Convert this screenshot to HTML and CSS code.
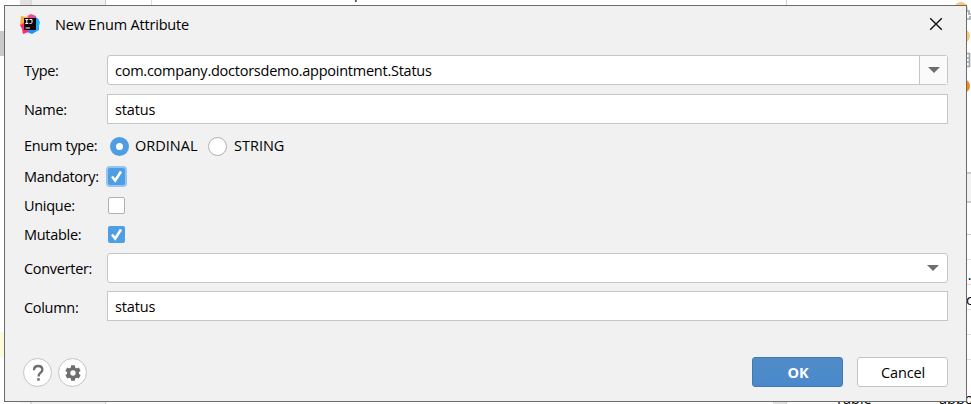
FILE: index.html
```
<!DOCTYPE html>
<html lang="en">
<head>
<meta charset="utf-8">
<title>New Enum Attribute</title>
<link rel="stylesheet" href="styles.css">
</head>
<body>
<div class="editor">
  <div class="edge"><i class="tab"></i><i class="line-mark"></i></div>
  <div class="scroll left"></div>
  <div class="gutter"></div>
  <div class="code"><span class="code-text">p</span></div>
  <div class="scroll right"></div>
  <div class="props">
    <i class="dot d1"></i><i class="dot d2"></i><i class="dot d3"></i>
    <svg class="side-icons" width="6" height="70" viewBox="0 0 6 70"><path d="M0 2h2v3h2M0 10h3V7" fill="none" stroke="#9aa7b0" stroke-width="1.6"/><path d="M0 44.5h2.500v13H0M0 49h2M0 53h2" fill="none" stroke="#9aa7b0" stroke-width="1.6"/></svg>
    <i class="bar"></i><i class="rule r1"></i><i class="rule r2"></i><i class="rule r3"></i><i class="rule r4"></i><i class="rule r5"></i><i class="rule r6"></i>
    <span class="cell c1">l.</span><span class="cell c2">c</span>
    <span class="cell c3">Table</span><span class="cell c4">appo</span>
  </div>
</div>
<main class="dialog">
  <header class="title">
    <svg class="logo" width="20" height="20" viewBox="0 0 20 20">
      <path d="M1 2l5 1 4-3-1 9-9 3z" fill="#fdae3d"/><path d="M0 11l8-4 3 10-8 3-1-5z" fill="#fe2877"/>
      <path d="M8 2l3-2 5 2-2 7-6-1z" fill="#f0489b"/><path d="M15 2l4 4v10l-7 4-5-2 7-9z" fill="#2a8cf8"/><path d="M17 5l3 3-2 8-3 1z" fill="#18b9f4"/>
      <path d="M4 4h12v12H4z" fill="#120609"/>
      <path d="M5.300 5.500h3M6.800 5.500v4M5.300 9.500h3M9.500 5.500h2.500v2.800q0 1.200-1.300 1.200H9.500M5.500 14h4.500" fill="none" stroke="#fff" stroke-width="1"/>
    </svg>
    <h1>New Enum Attribute</h1>
    <svg class="close" width="14" height="14" viewBox="0 0 14 14"><path d="M1.200 1.200l11.600 11.600M12.800 1.200L1.200 12.800" stroke="#111" stroke-width="1.400"/></svg>
  </header>
  <form class="form">
    <div class="row type"><label>Type:</label><div class="field combo"><span class="long">com.company.doctorsdemo.appointment.Status</span><b class="drop split"></b></div></div>
    <div class="row name"><label>Name:</label><div class="field"><span>status</span></div></div>
    <div class="row enum"><label>Enum type:</label><i class="radio on"></i><span class="ordinal">ORDINAL</span><i class="radio"></i><span class="string">STRING</span></div>
    <div class="row mandatory"><label>Mandatory:</label><i class="check on focus"><svg width="17" height="17" viewBox="0 0 17 17"><path d="M4 8.500l3.200 4L13 3.500" fill="none" stroke="#fff" stroke-width="2.500"/></svg></i></div>
    <div class="row unique"><label>Unique:</label><i class="check"></i></div>
    <div class="row mutable"><label>Mutable:</label><i class="check on"><svg width="17" height="17" viewBox="0 0 17 17"><path d="M4 8.500l3.200 4L13 3.500" fill="none" stroke="#fff" stroke-width="2.500"/></svg></i></div>
    <div class="row converter"><label>Converter:</label><div class="field combo"><b class="drop"></b></div></div>
    <div class="row column"><label>Column:</label><div class="field"><span>status</span></div></div>
  </form>
  <footer class="footer">
    <div class="round"><svg width="28" height="28" viewBox="0 0 28 28"><path d="M10 11.300Q10 7 14.200 7T18.400 10.700C18.400 13.700 14.500 13.700 14.500 17.400" fill="none" stroke="#6e6e6e" stroke-width="2.300"/><path d="M13.200 19.200h2.500v2.500h-2.500z" fill="#6e6e6e"/></svg></div>
    <div class="round"><svg width="28" height="28" viewBox="0 0 28 28"><g fill="#6e6e6e"><rect x="12" y="6.300" width="4" height="15.400" rx=".5"/><rect x="12" y="6.300" width="4" height="15.400" rx=".5" transform="rotate(60 14 14)"/><rect x="12" y="6.300" width="4" height="15.400" rx=".5" transform="rotate(120 14 14)"/><circle cx="14" cy="14" r="6"/></g><circle cx="14" cy="14" r="2.700" fill="#fff"/></svg></div>
    <div class="btn ok"><span>OK</span></div>
    <div class="btn cancel"><span>Cancel</span></div>
  </footer>
</main>
</body>
</html>
```
FILE: styles.css
```
* { box-sizing: border-box; }
body { margin: 0; width: 971px; height: 404px; overflow: hidden; position: relative; background: #fff; color: #000; font: 14.500px/20px "Open Sans", "Noto Sans", sans-serif; }
.editor { display: grid; grid-template-columns: 20px 12px 74px 667px 14px 184px; height: 404px; }
.editor > div { position: relative; overflow: hidden; }
.tab, .line-mark { position: absolute; left: 0; width: 5px; height: 25px; top: 31px; background: #c9c9c9; }
.line-mark { top: 332px; background: #fcfbdc; }
.left { background: linear-gradient(#e2e2e2 50%, #f8f8f8 50%); border-right: 2px solid #dcdcdc; }
.right { background: linear-gradient(#fff 50%, #e2e2e2 50%); border-right: 1px solid #d0d0d0; }
.gutter { background: #f1f1f1; border-right: 1px solid #c9c9c9; }
.code::before { content: ""; position: absolute; left: 45px; top: 0; height: 6px; width: 1px; background: #ddd; }
.code-text { position: absolute; left: 248px; top: -17px; }
.props > * { position: absolute; }
.dot { width: 14px; height: 14px; border-radius: 50%; background: #fbc77a; }
.d1 { left: 167px; top: 2px; }
.d2 { left: 169px; top: 29px; }
.d3 { left: 169px; top: 79px; background: #f8870d; }
.side-icons { left: 180px; top: 9px; }
.bar { left: 0; top: 172px; width: 184px; height: 31px; background: #f2f2f2; border: solid #ccc; border-width: 2px 0; }
.rule { left: 0; width: 184px; height: 1px; background: #ddd; }
.r1 { top: 234px; background: #c8c8c8; }
.r2 { top: 259px; }
.r3 { top: 284px; }
.r4 { top: 309px; }
.r5 { top: 334px; }
.r6 { top: 359px; }
.c1 { left: 177px; top: 265px; }
.c2 { left: 179px; top: 290px; }
.c3 { left: 48px; top: 389px; }
.c4 { left: 152px; top: 389px; }
.dialog { position: absolute; left: 4px; top: 5px; width: 963px; height: 397px; background: #f1f1f1; border: 1px solid #6b6b6d; display: flex; flex-direction: column; }
.title { height: 49px; display: flex; align-items: flex-start; padding: 8px 23px 0 15px; }
.title h1 { margin: 1px auto 0 15px; font-size: 14.500px; line-height: 20px; font-weight: 400; letter-spacing: -.18px; }
.close { margin-top: 3px; }
.form { margin: 0 18px 0 19px; }
.row { display: flex; align-items: center; height: 30px; }
.row label { width: 83px; flex: none; white-space: nowrap; letter-spacing: -.3px; padding-top: 1px; }
.name { margin-top: 9px; }
.enum { margin-top: 12px; height: 20px; }
.enum label { padding-top: 0; }
.mandatory { margin-top: 10px; height: 21px; }
.unique, .mutable { margin-top: 8px; height: 21px; }
.unique label, .mutable label { padding-top: 0; }
.converter { margin-top: 8px; }
.column { margin-top: 8px; }
.column label { padding-top: 3px; }
.field { flex: 1; height: 30px; background: #fff; border: 1px solid #c6c6c6; display: flex; align-items: center; padding-left: 7px; }
.field span { padding-top: 2px; letter-spacing: -.15px; }
.field .long { letter-spacing: -.245px; }
.combo { border-radius: 3px; }
.drop { margin-left: auto; width: 28px; height: 28px; display: grid; place-items: center; }
.drop::before { content: ""; border: 6px solid transparent; border-top: 6px solid #6e6e6e; border-bottom: 0; }
.split { background: #fafafa; border-left: 1px solid #c6c6c6; }
.radio { width: 19px; height: 19px; margin-left: 3px; border: 1px solid #b0b0b0; border-radius: 50%; background: #fff; }
.radio.on { border: 6px solid #4f9ee3; }
.ordinal { width: 73px; margin-left: 6px; }
.radio + .string { margin-left: 7px; }
.ordinal + .radio { margin-left: 0; }
.check { width: 17px; height: 17px; margin-left: 1px; background: #fff; border: 1px solid #b0b0b0; border-radius: 2px; display: block; }
.check.on { background: #4f9ee3; border: 0; }
.focus { box-shadow: 0 0 0 2px #97c3f3; }
.footer { margin: 36px 18px 0; display: flex; height: 30px; }
.round { width: 29px; height: 29px; margin: 1px 6px 0 0; border: 1px solid #c4c4c4; border-radius: 50%; background: #fff; }
.round svg { display: block; margin: -.5px; }
.btn { width: 91px; height: 30px; border: 1px solid #c4c4c4; border-radius: 3px; background: #fff; display: grid; place-items: center; }
.btn span { padding: 2px 0 0 1px; letter-spacing: -.15px; }
.ok { margin-left: auto; margin-right: 14px; background: linear-gradient(#528cc7, #4989cc); border-color: #3f78b7; color: #fff; font-weight: 700; }
```
